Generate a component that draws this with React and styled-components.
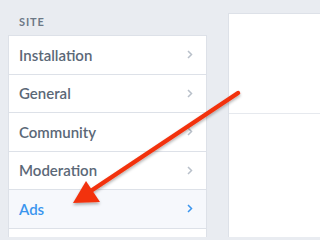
import React from "react";
import styled, { createGlobalStyle } from "styled-components";

const Global = createGlobalStyle`
  html, body {
    margin: 0;
    padding: 0;
    background: #e9ecf1;
    font-family: Lato, "Open Sans", sans-serif;
    -webkit-font-smoothing: antialiased;
  }
`;

const Page = styled.div`
  position: relative;
  width: 100%;
  height: 237px;
  overflow: hidden;
  display: flex;
  align-items: flex-start;
  gap: 21px;
  padding-left: 8px;
  box-sizing: border-box;
`;

const Sidebar = styled.nav`
  width: 199px;
  flex-shrink: 0;
`;

const Heading = styled.div`
  height: 35px;
  box-sizing: border-box;
  padding: 16px 0 0 11px;
  font-size: 11px;
  font-weight: 700;
  letter-spacing: 0.9px;
  color: #6c7886;
  line-height: 11px;
`;

const Menu = styled.ul`
  list-style: none;
  margin: 0;
  padding: 0;
  background: #fff;
  border: 1px solid #dde1e8;
  border-bottom: none;
`;

const Item = styled.li`
  height: 38.5px;
  box-sizing: border-box;
  border-bottom: 1px solid #dde1e8;
  display: flex;
  align-items: center;
  justify-content: space-between;
  padding: 0 13px 0 10px;
  font-size: 15px;
  font-weight: 600;
  color: ${(p) => (p.active ? "#3a95ee" : "#5b6877")};
  background: ${(p) => (p.active ? "#f6f8fc" : "#fff")};
`;

const Chevron = ({ color }) => (
  <svg width="6" height="9" viewBox="0 0 6 9">
    <path d="M1 1l3.5 3.5L1 8" fill="none" stroke={color} strokeWidth="1.5" />
  </svg>
);

const Panel = styled.div`
  flex: 1;
  margin-top: 13px;
  height: 230px;
  background: #fff;
  border-left: 1px solid #dde1e8;
  border-top: 1px solid #dde1e8;
`;

const PanelHeader = styled.div`
  height: 99px;
  border-bottom: 1px solid #e6e9ee;
`;

const Overlay = styled.svg`
  position: absolute;
  left: 0;
  top: 0;
  pointer-events: none;
`;

const items = ["Installation", "General", "Community", "Moderation", "Ads", ""];

export default function App() {
  return (
    <>
      <Global />
      <Page>
        <Sidebar>
          <Heading>SITE</Heading>
          <Menu>
            {items.map((label, i) => (
              <Item key={i} active={label === "Ads"}>
                {label}
                {label && <Chevron color={label === "Ads" ? "#3a95ee" : "#b9c0ca"} />}
              </Item>
            ))}
          </Menu>
        </Sidebar>
        <Panel>
          <PanelHeader />
        </Panel>
        <Overlay width="248" height="237" viewBox="0 0 248 237">
          <defs>
            <filter id="sh" x="-20%" y="-20%" width="140%" height="140%">
              <feDropShadow dx="0" dy="2" stdDeviation="1.5" floodColor="#000" floodOpacity="0.3" />
            </filter>
          </defs>
          <g filter="url(#sh)">
            <line x1="238" y1="93" x2="90" y2="191.5" stroke="#f2330f" strokeWidth="4.5" strokeLinecap="round" />
            <polygon points="73,203 86,181 100,202" fill="#f2330f" />
          </g>
        </Overlay>
      </Page>
    </>
  );
}
